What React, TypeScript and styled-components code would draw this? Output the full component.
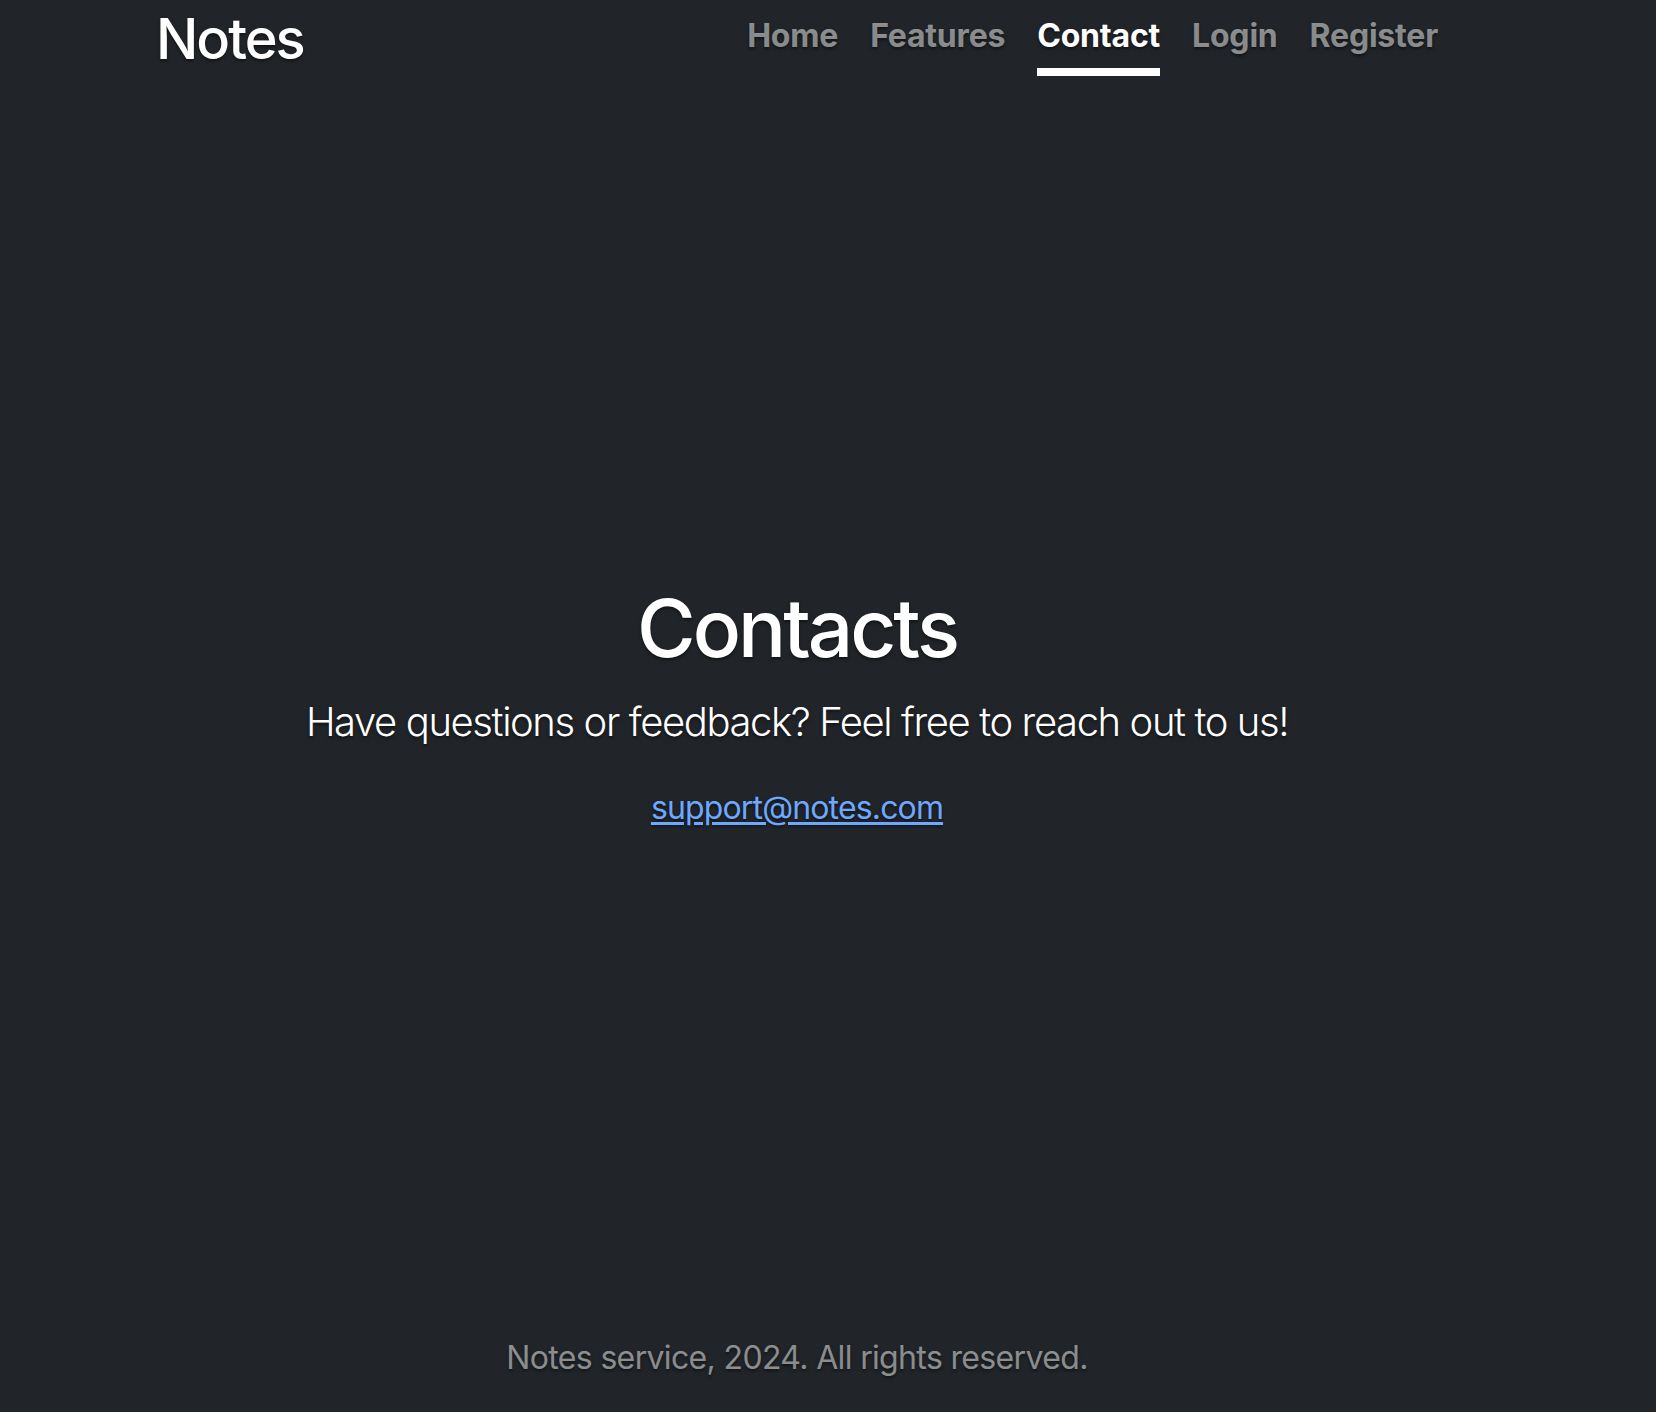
import React from "react";
import styled, { createGlobalStyle } from "styled-components";

const GlobalStyle = createGlobalStyle`
  html, body {
    margin: 0;
    padding: 0;
    background: #212529;
  }
  body {
    color: #fff;
    font-family: Inter, "Noto Sans", "Liberation Sans", sans-serif;
  }
  * { box-sizing: border-box; }
`;

const Page = styled.div`
  width: 1594px;
  height: 1412px;
  display: flex;
  flex-direction: column;
  text-align: center;
  text-shadow: 0 1.6px 3.2px rgba(0, 0, 0, 0.5);
`;

const Header = styled.header`
  width: 1282px;
  margin: 0 auto;
  padding-top: 4px;
  display: flex;
  justify-content: space-between;
  align-items: flex-start;
`;

const Brand = styled.h3`
  margin: 2px 0 0;
  font-size: 56px;
  font-weight: 500;
  line-height: 1.2;
  letter-spacing: -2px;
`;

const Nav = styled.nav`
  display: flex;
  gap: 32px;
`;

const NavLink = styled.a<{ $active?: boolean }>`
  display: block;
  padding: 8px 0;
  font-size: 32px;
  font-weight: 700;
  line-height: 48px;
  letter-spacing: -0.2px;
  text-decoration: none;
  color: ${(p) => (p.$active ? "#fff" : "rgba(255, 255, 255, 0.5)")};
  border-bottom: 8px solid ${(p) => (p.$active ? "#fff" : "transparent")};
`;

const Main = styled.main`
  flex: 1;
  display: flex;
  flex-direction: column;
  justify-content: center;
  align-items: center;
  padding: 2px 64px 0;
`;

const Title = styled.h1`
  margin: 0 0 16px;
  font-size: 80px;
  font-weight: 500;
  line-height: 1.2;
  letter-spacing: -3px;
`;

const Lead = styled.p`
  margin: 0 0 32px;
  font-size: 40px;
  font-weight: 300;
  line-height: 1.5;
  letter-spacing: -1.4px;
`;

const Text = styled.p`
  margin: 0;
  font-size: 32px;
  line-height: 48px;
`;

const Mail = styled.a`
  color: #6ea8fe;
  text-decoration: underline;
  text-underline-offset: 3px;
  letter-spacing: -0.85px;
`;

const Footer = styled.footer`
  margin-bottom: 30px;
`;

const FooterText = styled.p`
  margin: 0;
  font-size: 32px;
  line-height: 48px;
  letter-spacing: -0.65px;
  color: rgba(255, 255, 255, 0.5);
`;

const links = ["Home", "Features", "Contact", "Login", "Register"];

export default function App() {
  return (
    <>
      <GlobalStyle />
      <Page>
        <Header>
          <Brand>Notes</Brand>
          <Nav>
            {links.map((l) => (
              <NavLink key={l} href="#" $active={l === "Contact"}>
                {l}
              </NavLink>
            ))}
          </Nav>
        </Header>
        <Main>
          <Title>Contacts</Title>
          <Lead>Have questions or feedback? Feel free to reach out to us!</Lead>
          <Text>
            <Mail href="#">support@notes.com</Mail>
          </Text>
        </Main>
        <Footer>
          <FooterText>Notes service, 2024. All rights reserved.</FooterText>
        </Footer>
      </Page>
    </>
  );
}
